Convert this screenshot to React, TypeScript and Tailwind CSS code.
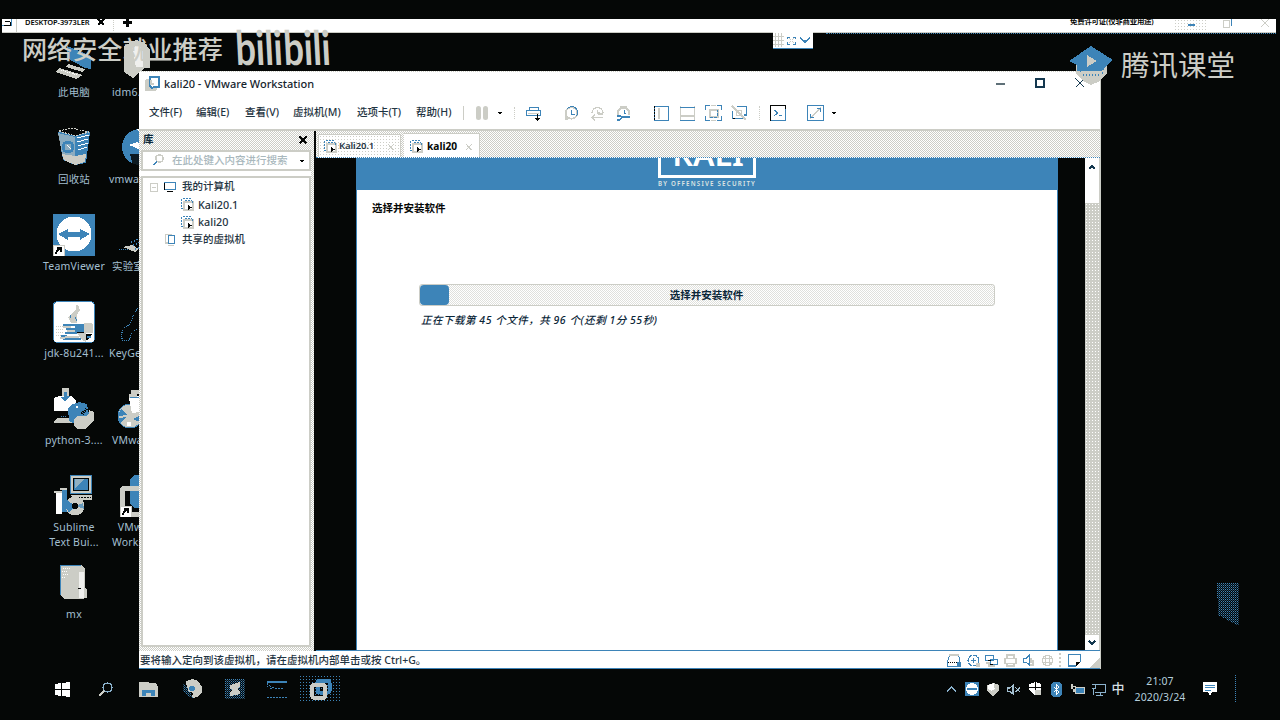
import type { ReactNode } from "react";

const BLUE = "#3d84b8";
const GRAY = "#cccdc6";
const INK = "#050706";

function Svg({ w, h, children, className = "" }: { w: number; h: number; children: ReactNode; className?: string }) {
  return (
    <svg width={w} height={h} viewBox={`0 0 ${w} ${h}`} fill="none" shapeRendering="crispEdges" className={`shrink-0 ${className}`}>
      {children}
    </svg>
  );
}

function PcIcon() {
  return (
    <Svg w={42} h={42}>
      <path d="M14 6 L38 16 V29 L32 28 L14 18 Z" fill={BLUE} />
      <path d="M15 24 L32 29 L30 32 L13 27 Z" fill={GRAY} />
      <path d="M6 28 L30 35 L23 39 L3 32 Z" fill={GRAY} />
      <path d="M8 30 L24 35" stroke="#fff" strokeDasharray="1 1" />
    </Svg>
  );
}

function RecycleIcon() {
  return (
    <Svg w={42} h={42}>
      <path d="M5 5 L18 1 L37 5 L33 36 L22 38 L10 33 Z" fill={BLUE} />
      <path d="M6 4 L18 1 L36 5 L22 9 Z" fill={INK} stroke={GRAY} strokeDasharray="2 1" />
      <path d="M5 6 L22 10 V37 L10 32 Z" fill={GRAY} fillOpacity=".55" />
      <path d="M24 11 L36 8 M24 15 L35 12 M25 19 L35 16 M25 23 L34 20" stroke="#fff" />
      <path d="M9 27 L22 29 L33 27 L32 35 L22 38 L11 33 Z" fill={GRAY} />
      <circle cx="15" cy="20" r="5" stroke={BLUE} strokeWidth="3" />
      <path d="M14 18 L18 22" stroke="#fff" />
    </Svg>
  );
}

function ShortcutBadge({ y = 31 }: { y?: number }) {
  return (
    <g transform={`translate(0 ${y})`}>
      <rect width="11" height="11" fill="#fff" stroke={GRAY} />
      <path d="M3 9 Q3 5 7 4 M4 3 H8 V7" stroke={INK} strokeWidth="1.6" />
    </g>
  );
}

function TeamViewerIcon() {
  return (
    <Svg w={42} h={42}>
      <rect width="42" height="42" fill={BLUE} />
      <circle cx="21" cy="20" r="17.5" fill="#fff" />
      <path d="M5 20 L15 15 V18 H27 V15 L37 20 L27 26 V23 H15 V26 Z" fill={BLUE} />
      <ShortcutBadge />
    </Svg>
  );
}

function JavaIcon() {
  return (
    <Svg w={42} h={42}>
      <rect x=".5" y=".5" width="41" height="41" rx="4" fill="#fff" stroke={BLUE} />
      <path d="M23 4 H25 L27 9 L24 14 V22 H18 L15 16 L21 11 L23 8 Z" fill={GRAY} />
      <path d="M22 16 L24 20 M17 17 L18 14" stroke={BLUE} />
      <path d="M3 25 h8 M3 28 h8 M3 31 h8 M3 34 h6" stroke={GRAY} strokeDasharray="1 1" />
      <path d="M10 24 H22 L24 25 M13 28 H23 M12 32 H25 M8 35 H14 M10 38 H28" stroke={BLUE} strokeWidth="1.500" />
      <path d="M10 26 H18 M14 30 H24 M12 36 H26 M7 37 H12" stroke={GRAY} strokeWidth="2" />
      <rect x="22" y="23" width="9" height="8" fill={BLUE} />
      <path d="M31 22 H38 L40 24 V32 H31 Z M24 32 H33 V41 L28 38 Z" fill={GRAY} />
      <path d="M33 33 H39 L36 38 L33 39 Z" fill={INK} />
      <path d="M34 36 H38" stroke={BLUE} strokeWidth="2" />
      <path d="M24 31 H31" stroke={INK} />
    </Svg>
  );
}

function PythonIcon() {
  return (
    <Svg w={42} h={42}>
      <rect x="9" y="0" width="7" height="12" fill={GRAY} />
      <path d="M1 10 L6 8 H18 L23 12 V23 H1 Z" fill="#fff" />
      <path d="M11 4 H14 V8 H17 L12 14 L7 9 H11 Z" fill={BLUE} />
      <path d="M1 33 L5 30 H22 V35 H1 Z" fill={GRAY} />
      <path d="M8 28 H14" stroke={BLUE} strokeDasharray="1 1" />
      <path d="M15 20 L20 16 L26 14 L34 16 L36 27 L26 31 L22 36 L16 33 Z" fill={BLUE} />
      <path d="M36 22 L41 24 V33 L36 37 L33 41 H24 L21 37 V31 L25 28 H33 L36 26 Z" fill={GRAY} />
      <path d="M29 26 L34 20" stroke={INK} strokeWidth="3" strokeDasharray="1 1" />
      <circle cx="24" cy="19" r="1.2" fill="#fff" />
    </Svg>
  );
}

function InstallerIcon() {
  return (
    <Svg w={42} h={42}>
      <rect x="17" y="0" width="21" height="18" fill={GRAY} stroke={BLUE} />
      <rect x="20" y="3" width="15" height="12" fill={BLUE} stroke={INK} />
      <path d="M22 13 V4 H31 Z" fill={GRAY} fillOpacity=".6" />
      <path d="M18 20 H39 V25 H22 Z" fill={GRAY} />
      <path d="M25 22 H38" stroke={INK} strokeDasharray="2 1" />
      <rect x="3" y="17" width="6" height="22" fill="#fff" />
      <path d="M1 17 H9 M7 14 H14" stroke={GRAY} strokeWidth="2" />
      <rect x="9" y="15" width="5" height="22" fill={BLUE} />
      <circle cx="22" cy="31" r="9.5" fill={GRAY} />
      <path d="M22 31 L14 25 L12 31 L16 38 Z" fill={BLUE} />
      <path d="M22 31 L30 28 L31 34 Z" fill={BLUE} fillOpacity=".7" />
      <circle cx="22" cy="31" r="3" fill={INK} />
    </Svg>
  );
}

function FolderIcon() {
  return (
    <Svg w={42} h={42}>
      <path d="M7 3 H28 L32 7 V25 L34 28 V36 L28 37 H12 L7 33 Z" fill={GRAY} />
      <path d="M7.500 33 V3.500 H28" stroke={BLUE} />
      <path d="M26 10 H31 V36 H26 Z" fill="#fff" fillOpacity=".7" />
      <path d="M10 6 h7 M9 9 h6 M10 12 h5 M9 15 h4" stroke="#fff" strokeDasharray="1 1" />
      <path d="M25 26 H28" stroke={INK} />
    </Svg>
  );
}

function ArchiveIcon() {
  return (
    <Svg w={42} h={42}>
      <path d="M15 6 L27 0 L36 3 L41 10 V28 H36 L24 38 L15 32 Z" fill={GRAY} />
      <path d="M23 8 L30 4 L34 12 V27 H27 Z" fill="#fff" fillOpacity=".7" />
    </Svg>
  );
}

function DiscIcon() {
  return (
    <Svg w={42} h={42}>
      <circle cx="31" cy="20" r="18" fill={BLUE} />
      <path d="M28 2 H42 V14 L35 10 Z M20 18 L28 15 L42 22 V27 L32 23 Z" fill="#fff" />
      <path d="M21 27 H42 V38 H24 Z" fill={INK} fillOpacity=".85" />
    </Svg>
  );
}

function BoatIcon() {
  return (
    <Svg w={42} h={42}>
      <path d="M14 33 L23 31 L30 35 L26 38 Z" fill={GRAY} />
      <path d="M22 28 L34 23 M24 31 L38 26 M26 35 L38 30" stroke={BLUE} strokeDasharray="1 2" strokeWidth="2" />
      <path d="M10 35 H20" stroke={BLUE} strokeDasharray="1 1" />
    </Svg>
  );
}

function KeyIcon() {
  return (
    <Svg w={42} h={42}>
      <path d="M29 7 L25 12 L23 18 L20 24 L14 28 L12 35 L14 40 L20 39 L23 32 L28 28" stroke={BLUE} strokeDasharray="1 1" />
    </Svg>
  );
}

function VmInstallIcon() {
  return (
    <Svg w={42} h={42}>
      <circle cx="21" cy="28" r="12" fill={GRAY} stroke={BLUE} />
      <path d="M18 27 L12 21 L9 28 Z M17 29 L11 36 L10 30 Z M24 31 L31 34 L30 28 Z" fill={BLUE} />
      <path d="M20 10 L30 8 V24 L23 25 Z M18 34 H22 V38 H18 Z" fill="#fff" />
      <path d="M22 4 H32 M20 8 H28" stroke={GRAY} strokeWidth="4" />
      <path d="M21 9.500 H32" stroke={BLUE} />
    </Svg>
  );
}

function VmwareBigIcon() {
  return (
    <Svg w={42} h={42}>
      <rect x="21" y="0" width="20" height="33" rx="7" fill={BLUE} />
      <rect x="13" y="13" width="26" height="26" rx="3" stroke={GRAY} strokeWidth="5" />
      <g transform="translate(11 0)">
        <ShortcutBadge y={31} />
      </g>
    </Svg>
  );
}

function DesktopItem({ icon, lines, side }: { icon: ReactNode; lines: string[]; side?: boolean }) {
  return (
    <div className={side ? "flex h-[87px] w-[75px] flex-col items-start" : "flex h-[87px] w-[76px] flex-col items-center"}>
      {icon}
      <div
        className={
          side
            ? "mt-[3px] whitespace-pre text-left text-[10.5px] leading-[15px] tracking-[0.2px] text-[#a3bfd0]"
            : "mt-[3px] whitespace-pre text-center text-[10.5px] leading-[15px] tracking-[0.2px] text-[#a3bfd0]"
        }
      >
        {lines.map((l) => (
          <div key={l}>{l}</div>
        ))}
      </div>
    </div>
  );
}

function Desktop() {
  return (
    <div className="flex pl-[36px] pt-[40px]">
      <div className="flex flex-col">
        <DesktopItem icon={<PcIcon />} lines={["此电脑"]} />
        <DesktopItem icon={<RecycleIcon />} lines={["回收站"]} />
        <DesktopItem icon={<TeamViewerIcon />} lines={["TeamViewer"]} />
        <DesktopItem icon={<JavaIcon />} lines={["jdk-8u241..."]} />
        <DesktopItem icon={<PythonIcon />} lines={["python-3...."]} />
        <DesktopItem icon={<InstallerIcon />} lines={["Sublime", "Text Bui..."]} />
        <DesktopItem icon={<FolderIcon />} lines={["mx"]} />
      </div>
      <div className="-ml-[3px] flex flex-col">
        <DesktopItem side icon={<ArchiveIcon />} lines={[" idm6.36"]} />
        <DesktopItem side icon={<DiscIcon />} lines={["vmware"]} />
        <DesktopItem side icon={<BoatIcon />} lines={[" 实验室"]} />
        <DesktopItem side icon={<KeyIcon />} lines={["KeyGen"]} />
        <DesktopItem side icon={<VmInstallIcon />} lines={[" VMware"]} />
        <DesktopItem side icon={<VmwareBigIcon />} lines={["   VMware", " Workst"]} />
      </div>
    </div>
  );
}

function RemoteBar() {
  return (
    <div className="absolute left-[2px] top-[19px] h-[15px] w-[1274px]">
      <div className="h-[14px] overflow-hidden border-b border-[#cccdc6] bg-white">
        <div className="flex h-[6px] items-center whitespace-nowrap text-[7.500px] font-semibold text-[#050706]">
          <Svg w={10} h={14} className="mt-[2px]">
            <path d="M0 1.500 H9.500 V9.500 H0" stroke={BLUE} />
            <path d="M3 5 H8 M2 9 H8 V6" stroke={INK} />
          </Svg>
          <div className="ml-[4px] h-[22px] w-px bg-[#cccdc6]" />
          <span className="ml-[8px] mt-[2px] w-[72px] tracking-[-0.1px]">DESKTOP-3973LER</span>
          <Svg w={8} h={8}>
            <path d="M1 1 L7 7 M7 1 L1 7" stroke={INK} strokeWidth="2" />
          </Svg>
          <div className="ml-[8px] h-[26px] border-l border-dotted border-[#cccdc6]" />
          <Svg w={9} h={9} className="ml-[9px]">
            <path d="M0 4.500 H9 M4.500 0 V9" stroke={INK} strokeWidth="2.400" />
          </Svg>
          <span className="ml-[938px] w-[104px] text-[7.400px] tracking-[-0.2px]">免费许可证(仅非商业用途)</span>
          <div className="mt-[10px] flex h-[16px] w-[34px] items-center justify-center bg-[radial-gradient(#cccdc6_0.6px,#fff_0.7px)] bg-[length:3px_3px] pb-[4px]">
            <div className="h-[2px] w-[7px] bg-[#3d84b8]" />
          </div>
          <Svg w={9} h={10} className="ml-[15px] mt-[2px]">
            <rect x=".5" y="2.500" width="6" height="7" stroke={GRAY} />
            <path d="M2 .5 H8.500 V8" stroke={BLUE} />
          </Svg>
          <Svg w={8} h={8} className="ml-[29px] mt-[2px]">
            <path d="M0 0 L8 8 M8 0 L0 8" stroke={GRAY} strokeWidth="1.300" />
          </Svg>
        </div>
      </div>
      <div className="ml-[824px] border-b border-dotted border-[#3d84b8]" />
    </div>
  );
}

function BarHandle() {
  return (
    <div className="absolute left-[773px] top-[32px] flex h-[17px] w-[40px] items-center gap-[3px] border-b border-[#3d84b8] bg-white">
      <Svg w={11} h={16}>
        <path d="M2.500 1 V15 M5.500 1 V15 M8.500 1 V15 M0 4.500 H11 M0 8.500 H11 M0 12.500 H11" stroke={GRAY} />
      </Svg>
      <Svg w={9} h={9}>
        <path d="M.5 2.500 V1 H3 M6 1 H8.500 V3 M.5 6 V8 H3 M6 8 H8.500 V6" stroke={BLUE} />
        <path d="M2 2 L4 4 M7 2 L5 4 M2 7 L4 5 M7 7 L5 5" stroke={GRAY} />
      </Svg>
      <Svg w={12} h={8}>
        <path d="M1 1.500 L6 6 L11 1.500" stroke={BLUE} strokeWidth="1.600" />
      </Svg>
    </div>
  );
}

function VmIcon() {
  return (
    <Svg w={13} h={13}>
      <path d="M2 10 H.5 V.5 H9.500 V2" stroke={BLUE} strokeDasharray="2 1" />
      <rect x="3" y="3.500" width="8.500" height="8.500" fill="#fff" stroke={GRAY} strokeWidth="2" />
      <path d="M11.500 3 V6 M4 2.500 H11" stroke={BLUE} strokeDasharray="2 1" />
      <path d="M7 7 L11 9.500 L7 12 Z" fill={INK} />
    </Svg>
  );
}

function Divider() {
  return <div className="h-[14px] w-px bg-[#cccdc6]" />;
}

function Caret() {
  return (
    <Svg w={6} h={4}>
      <path d="M0 .5 H6 L3 4 Z" fill={INK} />
    </Svg>
  );
}

function Slot({ className, children }: { className: string; children: ReactNode }) {
  return <div className={`flex shrink-0 items-center justify-center ${className}`}>{children}</div>;
}

function MenuBar() {
  return (
    <div className="flex h-[34px] items-center whitespace-nowrap border-b-2 border-[#cccdc6] pl-[10px] text-[10.5px] font-medium text-[#1f3442]">
      <span className="w-[47px]">文件(F)</span>
      <span className="w-[49px]">编辑(E)</span>
      <span className="w-[48px]">查看(V)</span>
      <span className="w-[64px]">虚拟机(M)</span>
      <span className="w-[59px]">选项卡(T)</span>
      <span className="w-[41px]">帮助(H)</span>
      <Slot className="w-[12px]"><Divider /></Slot>
      <Slot className="w-[26px] gap-[2px]">
        <div className="h-[14px] w-[5px] rounded-sm bg-[#cccdc6]" />
        <div className="h-[14px] w-[5px] rounded-sm bg-[#cccdc6]" />
      </Slot>
      <Slot className="w-[10px]"><Caret /></Slot>
      <Slot className="w-[18px]">
        <div className="h-[12px] border-l border-dotted border-[#cccdc6]" />
      </Slot>
      <Slot className="w-[21px]">
        <Svg w={15} h={15}>
          <path d="M3.500 5 V1.500 H12 V5" stroke={BLUE} />
          <rect x=".5" y="4.500" width="14" height="5" stroke={BLUE} />
          <path d="M2 7.500 H13" stroke={GRAY} />
          <path d="M11.500 8 V13 M9.500 12 L11.500 14 L13.500 12" stroke={INK} strokeWidth="1.200" />
        </Svg>
      </Slot>
      <Slot className="ml-[14px] w-[26px]">
        <Svg w={14} h={15}>
          <circle cx="7.500" cy="7" r="5.800" stroke={GRAY} strokeWidth="1.800" />
          <path d="M3 3 A5.800 5.800 0 0 1 12.500 10" stroke={BLUE} />
          <path d="M7.500 4 V8 H10.500" stroke={BLUE} />
          <path d="M1 9 L6 13 L1 14 Z" fill={GRAY} />
        </Svg>
      </Slot>
      <Slot className="w-[26px]">
        <Svg w={15} h={15}>
          <path d="M2 7 A5.500 5.500 0 0 1 13 7 M7.500 4 V7 H10 M2 11.500 H13 M5 9 L2 11.500 L5 14 M8 8 H13" stroke={GRAY} strokeWidth="1.400" />
        </Svg>
      </Slot>
      <Slot className="w-[26px]">
        <Svg w={15} h={15}>
          <path d="M2 9 V5 L5 1.500 H10 L13 5 V9" stroke={GRAY} strokeWidth="2.200" />
          <path d="M8 4 V7 H10" stroke={BLUE} />
          <path d="M1 9.500 H4 L5.500 11 H14 M1 13.500 H4 L5.500 12" stroke={BLUE} strokeWidth="2" />
        </Svg>
      </Slot>
      <Slot className="ml-[12px] w-[26px]">
        <Svg w={15} h={15}>
          <rect x=".7" y=".7" width="13.600" height="13.600" stroke={BLUE} strokeWidth="1.400" />
          <path d="M.5 0 V15" stroke={INK} strokeDasharray="2 1" />
          <path d="M5 2 V13" stroke={GRAY} strokeWidth="2" />
        </Svg>
      </Slot>
      <Slot className="w-[26px]">
        <Svg w={15} h={15}>
          <path d="M.5 0 V15 M14.500 0 V15" stroke={GRAY} />
          <path d="M0 1 H15 M0 14 H15" stroke={BLUE} />
          <path d="M1 10 H14" stroke={GRAY} strokeWidth="2" />
        </Svg>
      </Slot>
      <Slot className="w-[26px]">
        <Svg w={17} h={16}>
          <path d="M.5 5 V.5 H5 M12 .5 H16.500 V5 M.5 11 V15.500 H5 M12 15.500 H16.500 V11" stroke={BLUE} />
          <path d="M6 .5 H11 M6 15.500 H11" stroke={GRAY} />
          <rect x="4.500" y="4.500" width="8" height="7" stroke={GRAY} strokeWidth="2" />
          <path d="M5 12 H12 V5" stroke={BLUE} strokeDasharray="3 1" />
        </Svg>
      </Slot>
      <Slot className="w-[26px]">
        <Svg w={16} h={16}>
          <path d="M6 1.500 H15.500 V10 H13 M1.500 6 V13.500 H12" stroke={BLUE} strokeWidth="1.300" />
          <path d="M1.500 13.500 H5 M10 6 V10" stroke={INK} strokeDasharray="2 1" />
          <path d="M1 1 L15 15" stroke={GRAY} strokeWidth="2.500" />
          <path d="M5 5 H10 V10 H5 Z" stroke={GRAY} />
        </Svg>
      </Slot>
      <Slot className="w-[14px]"><div className="h-[14px] border-l border-dotted border-[#cccdc6]" /></Slot>
      <Slot className="w-[24px]">
        <Svg w={16} h={16}>
          <rect x=".7" y=".7" width="14.600" height="14.600" stroke={INK} strokeWidth="1.400" />
          <path d="M1 15.300 H15.300 V4" stroke={BLUE} strokeWidth="1.400" />
          <path d="M4 5 L8 8 L4 10.500 M9 10.500 H12" stroke={BLUE} />
        </Svg>
      </Slot>
      <Slot className="ml-[14px] w-[23px]">
        <Svg w={17} h={16}>
          <rect x=".5" y=".5" width="16" height="15" stroke={BLUE} />
          <path d="M3 13 L14 3" stroke={GRAY} strokeWidth="1.500" />
          <path d="M10 3.500 H13.500 V7 M3.500 9 V12.500 H7" stroke={BLUE} />
        </Svg>
      </Slot>
      <Slot className="w-[14px]"><Caret /></Slot>
    </div>
  );
}

function TitleBar() {
  return (
    <div className="flex h-[26px] items-center border-t border-dotted border-[#cccdc6] pl-[6px]">
      <Svg w={16} h={16} className="mb-px">
        <rect x="0" y="3" width="12" height="12" rx="2" fill={GRAY} />
        <path d="M4.500 1 H14 V11 H9 L7 12 L4.500 10 Z" fill="#fff" stroke={BLUE} strokeWidth="2" />
        <path d="M6 4 V8 H9" stroke={GRAY} strokeWidth="2" />
      </Svg>
      <span className="mb-px ml-[3px] w-[832px] whitespace-nowrap text-[11px] font-medium text-[#16242d]">kali20 - VMware Workstation</span>
      <div className="mb-[2px] h-[2px] w-[9px] bg-[#5f7078]" />
      <div className="mb-[3px] ml-[30px] h-[10px] w-[10px] border-2 border-[#14384f]" />
      <Svg w={10} h={10} className="mb-[3px] ml-[30px]">
        <path d="M.5 .5 L9.500 9.500 M9.500 .5 L.5 9.500" stroke="#14384f" strokeWidth="1.400" />
      </Svg>
    </div>
  );
}

function TreeRow({ className, icon, label }: { className: string; icon: ReactNode; label: string }) {
  return (
    <div className={`flex h-[17.5px] items-center whitespace-nowrap ${className}`}>
      {icon}
      <span>{label}</span>
    </div>
  );
}

function Library() {
  return (
    <div className="flex w-[175px] shrink-0 flex-col bg-[repeating-conic-gradient(#cccdc6_0_25%,#fff_0_50%)] bg-[length:2px_2px] pr-[3px]">
      <div className="flex h-[19px] items-center justify-between pb-[2px] pl-[4px] pr-[4px] text-[10.5px] font-bold text-[#0d2a3c]">
        <span>库</span>
        <Svg w={8} h={8}>
          <path d="M.5 .5 L7.500 7.500 M7.500 .5 L.5 7.500" stroke={INK} strokeWidth="1.800" />
        </Svg>
      </div>
      <div className="ml-[2px] flex h-[21px] items-center border-2 border-[#cccdc6] bg-white pl-[9px] pr-[2px]">
        <Svg w={12} h={12} className="mb-[2px]">
          <circle cx="7.500" cy="4.500" r="3.700" stroke={GRAY} strokeWidth="1.600" />
          <path d="M5 7.500 L1 11" stroke={BLUE} strokeWidth="1.300" />
        </Svg>
        <span className="ml-[8px] w-[127px] shrink-0 whitespace-nowrap pt-px text-[10.500px] font-medium text-[#a9b8bd]">在此处键入内容进行搜索</span>
        <Caret />
      </div>
      <div className="h-[5px] bg-white" />
      <div className="ml-[2px] flex-1 border-2 border-[#cccdc6] bg-white pt-[0.600px] text-[10.5px] font-medium text-[#1f3442]">
        <TreeRow
          className="gap-[6px] pl-[7px]"
          icon={
            <>
              <Svg w={8} h={9}>
                <rect x=".5" y=".5" width="7" height="8" stroke={GRAY} />
                <path d="M2 4.500 H6" stroke={GRAY} />
              </Svg>
              <Svg w={12} h={10}>
                <rect x=".5" y=".5" width="11" height="7" stroke={BLUE} />
                <path d="M0 1 V8 M3 9.500 H9" stroke={INK} />
              </Svg>
            </>
          }
          label="我的计算机"
        />
        <TreeRow className="gap-[4px] pl-[38px] text-[10.8px]" icon={<VmIcon />} label="Kali20.1" />
        <TreeRow className="gap-[4px] pl-[38px] text-[10.8px]" icon={<VmIcon />} label="kali20" />
        <TreeRow
          className="gap-[6px] pl-[22px]"
          icon={
            <Svg w={11} h={12}>
              <path d="M3 9 H.5 V.5 H7" stroke={GRAY} strokeWidth="1.500" />
              <rect x="3" y="1.500" width="6.500" height="8" stroke={BLUE} />
              <path d="M3 11.500 H9" stroke={GRAY} strokeWidth="2" />
            </Svg>
          }
          label="共享的虚拟机"
        />
      </div>
      <div className="h-[4px]" />
    </div>
  );
}

function CloseTab() {
  return (
    <Svg w={6} h={6}>
      <path d="M0 0 L6 6 M6 0 L0 6" stroke={GRAY} strokeWidth="1.400" />
    </Svg>
  );
}

function Tabs() {
  return (
    <div className="flex h-[27px] items-end border-b border-dotted border-[#3d84b8] bg-[repeating-conic-gradient(#cccdc6_0_25%,#fff_0_50%)] bg-[length:2px_2px] pl-[2px]">
      <div className="flex h-[23px] w-[83px] items-center border border-b-0 border-[#cccdc6] bg-[radial-gradient(#cccdc6_0.6px,#fff_0.7px)] bg-[length:3px_3px] pl-[5px] pt-px text-[9.500px] font-semibold text-[#1f3442]">
        <VmIcon />
        <span className="ml-[2px] w-[49px] tracking-[-0.1px]">Kali20.1</span>
        <CloseTab />
      </div>
      <div className="ml-[3px] flex h-[24px] w-[76px] items-center border-r border-t border-[#cccdc6] bg-white pl-[6px] pt-[2px] text-[10.200px] font-bold text-[#050706]">
        <VmIcon />
        <span className="ml-[4px] w-[39px]">kali20</span>
        <CloseTab />
      </div>
    </div>
  );
}

function KaliLogo() {
  return (
    <div className="flex flex-col items-center">
      <div className="flex h-[20px] w-[98px] items-start justify-center border-x-[3px] border-b-[3px] border-white">
        <div className="flex h-[8px] items-end justify-center overflow-hidden pl-[2px] text-[32px] font-semibold leading-[24px] text-white">KALI</div>
      </div>
      <div className="mt-[2px] h-[8px] whitespace-nowrap text-[6.200px] font-semibold leading-[8px] tracking-[1.200px] text-[#dfe4e3]">BY OFFENSIVE SECURITY</div>
    </div>
  );
}

function Installer() {
  return (
    <div className="flex flex-1 flex-col border-x border-[#3d84b8] bg-white">
      <div className="flex h-[32px] justify-center overflow-hidden bg-[#3d84b8]">
        <KaliLogo />
      </div>
      <div className="ml-[15px] mt-[10px] h-[16px] text-[10.500px] font-bold leading-[16px] text-[#050706]">选择并安装软件</div>
      <div className="ml-[62px] mt-[68px] flex h-[22px] w-[576px] rounded-[3px] border border-[#cccdc6] bg-[repeating-conic-gradient(#dfe0dc_0_25%,#fff_0_50%)] bg-[length:2px_2px]">
        <div className="w-[29px] rounded-sm bg-[#3d84b8]" />
        <div className="flex flex-1 items-center justify-center pr-[30px] pt-px text-[10.500px] font-bold text-[#0b2638]">
          <span>选择并安装软件</span>
        </div>
      </div>
      <div className="ml-[64px] mt-[6px] whitespace-nowrap text-[10.500px] font-medium italic leading-[16px] tracking-[0.520px] text-[#0b2638]">
        正在下载第 45 个文件，共 96 个(还剩 1分 55秒)
      </div>
    </div>
  );
}

function Scrollbar() {
  return (
    <div className="flex w-[15px] flex-col border-r border-[#cccdc6] bg-white">
      <div className="flex h-[45px] justify-center pt-[6px]">
        <Svg w={8} h={6}>
          <path d="M1 5 L4 2 L7 5" stroke="#14384f" strokeWidth="2" />
        </Svg>
      </div>
      <div className="flex-1 bg-[radial-gradient(#fff_0.6px,#cccdc6_0.7px)] bg-[length:3px_3px]" />
      <div className="flex h-[15px] items-center justify-center">
        <Svg w={8} h={6}>
          <path d="M1 1 L4 4 L7 1" stroke="#14384f" strokeWidth="2" />
        </Svg>
      </div>
    </div>
  );
}

function StatusBar() {
  return (
    <div className="flex h-[18px] items-center border-b border-[#3d84b8] bg-white pt-px">
      <span className="w-[808px] shrink-0 whitespace-nowrap pl-[1px] pt-[2px] text-[10.500px] font-medium text-[#1f3442]">要将输入定向到该虚拟机，请在虚拟机内部单击或按 Ctrl+G。</span>
      <div className="flex items-center gap-[5.500px]">
        <Svg w={14} h={13}>
          <path d="M.5 8 L2.500 1 H11.500 L13 8 V12 H.5 Z" stroke={BLUE} />
          <path d="M2 1 H12" stroke={GRAY} strokeWidth="2" />
          <path d="M1 8.500 H11" stroke={INK} strokeDasharray="1 1" />
          <rect x="10" y="8" width="3" height="4" fill={BLUE} />
        </Svg>
        <Svg w={13} h={13}>
          <circle cx="6.500" cy="6.500" r="5.500" stroke={BLUE} strokeDasharray="4 1" />
          <path d="M4 6.500 H9 M6.500 4 V9" stroke={BLUE} />
          <path d="M9 9 H13 V13 H9 Z" fill={GRAY} />
        </Svg>
        <Svg w={13} h={13}>
          <path d="M.5 1 H8.500 V6 H.5 Z M5 5 H12.500 V10 H5 Z" fill="#fff" stroke={BLUE} />
          <path d="M3 6.500 H6 M5 10.500 H8" stroke={INK} />
          <path d="M1 9 H4 V12 H10" stroke={GRAY} strokeWidth="2" />
        </Svg>
        <Svg w={13} h={13}>
          <path d="M3 4 V1 H10 V4 M1 4.500 H12 V9.500 H1 Z M3 9 V12 H10 V9" stroke={GRAY} strokeWidth="1.500" />
        </Svg>
        <Svg w={13} h={13}>
          <path d="M1 4.500 H4 L7 1.500 V10.500 L4 8 H1 Z" stroke={BLUE} />
          <path d="M9 4 V9 M11 6 V12 M8 11 H12" stroke={GRAY} strokeWidth="2" />
        </Svg>
        <Svg w={13} h={13}>
          <circle cx="6.500" cy="6.500" r="5" stroke={GRAY} strokeWidth="1.500" />
          <path d="M2 4.500 H11 M2 8.500 H11 M4.500 2 V11 M8.500 2 V11" stroke={GRAY} />
        </Svg>
      </div>
      <div className="ml-[5px] h-[14px] border-l-2 border-dotted border-[#cccdc6]" />
      <Svg w={13} h={13} className="ml-[7px]">
        <path d="M8 12 H.5 V.5 H12.500 V8" stroke={BLUE} strokeWidth="1.300" />
        <path d="M8 8 H12 L8 12 Z" fill={INK} />
      </Svg>
      <Svg w={12} h={16} className="ml-[8px]">
        <path d="M12 5 V16 H0 Z" fill={GRAY} />
      </Svg>
    </div>
  );
}

function VmWindow() {
  return (
    <div className="absolute left-[139px] top-[71px] flex h-[598px] w-[962px] flex-col overflow-hidden border-r border-[#cccdc6] bg-white">
      <TitleBar />
      <MenuBar />
      <div className="flex min-h-0 flex-1">
        <Library />
        <div className="flex flex-1 flex-col border-l-2 border-[#050706]">
          <Tabs />
          <div className="flex flex-1 border-b border-[#3d84b8] bg-[#050706] pl-[40px]">
            <Installer />
            <div className="w-[27px]" />
            <Scrollbar />
          </div>
        </div>
      </div>
      <StatusBar />
    </div>
  );
}

function LogoWord() {
  return (
    <span className="block w-[47px] origin-top-left skew-x-4 scale-y-[1.32] font-[Lato,sans-serif] text-[36px] font-bold leading-[36px] tracking-[-0.2px]">
      bili
    </span>
  );
}

function Watermarks() {
  return (
    <>
      <div className="absolute left-[22px] top-[31px] whitespace-nowrap text-[25.100px] font-medium leading-[36px] text-[#cccdc6]">网络安全就业推荐</div>
      <div className="absolute left-[234px] top-[23px] flex gap-[1px] text-[#cccdc6]">
        <LogoWord />
        <LogoWord />
      </div>
      <div className="absolute left-[1069px] top-[45px] flex items-start">
        <Svg w={44} h={40}>
          <path d="M7 20 H38 V28 L31 36 L22 40 L14 36 L7 29 Z" fill={GRAY} />
          <path d="M8 22 L14 24 L10 27 M34 24 H37 M33 28 H36 M14 30 H30" stroke={BLUE} strokeDasharray="1 2" strokeWidth="2" />
          <path d="M22 1 L44 15 L32 26 H8 V20 L0 16 Z" fill={BLUE} />
          <path d="M18 10 L28 16 L18 22 Z" fill={GRAY} />
        </Svg>
        <span className="ml-[8px] whitespace-nowrap text-[28.500px] font-normal leading-[40px] text-[#cccdc6]">腾讯课堂</span>
      </div>
      <div className="absolute left-[1217px] top-[583px]">
        <Svg w={22} h={43}>
          <defs>
            <pattern id="mesh" width="2" height="2" patternUnits="userSpaceOnUse">
              <rect width="1" height="1" fill={BLUE} />
              <rect x="1" y="1" width="1" height="1" fill={BLUE} fillOpacity=".5" />
            </pattern>
          </defs>
          <path d="M0 0 H22 V43 L1 32 Z" fill="url(#mesh)" />
        </Svg>
      </div>
    </>
  );
}

function Taskbar() {
  return (
    <div className="absolute bottom-0 left-0 flex h-[51px] w-full items-start pt-[4px]">
      <div className="ml-[41px] flex h-[32px] items-center">
        <Slot className="w-[43px]">
          <Svg w={15} h={15}>
            <path d="M0 2 L6 1 V7 H0 Z M7 1 L15 0 V7 H7 Z M0 8 H6 V14 L0 13 Z M7 8 H15 V15 L7 14 Z" fill="#fff" />
          </Svg>
        </Slot>
        <Slot className="w-[42px]">
          <Svg w={15} h={15}>
            <circle cx="9.500" cy="5.500" r="4.500" stroke="#8bb2cd" strokeWidth="1.300" />
            <path d="M6 9 L1 14" stroke={GRAY} strokeWidth="1.500" />
          </Svg>
        </Slot>
        <Slot className="w-[45px]">
          <Svg w={19} h={16}>
            <path d="M0 1 H9 L10 2 H17 L19 6 V16 H0 Z" fill={GRAY} />
            <path d="M3 15 V9 H16 V15 H12 V12 H7 V15 Z" fill={BLUE} />
          </Svg>
        </Slot>
        <Slot className="w-[42px]">
          <Svg w={20} h={20}>
            <path d="M4 2 L10 0 L16 2 L20 8 V13 L16 18 L10 19 L11 14 L5 9 Z" fill={GRAY} />
            <path d="M1 4 L7 10 L11 19 L4 16 L1 11 Z" fill="url(#mesh)" />
            <circle cx="10" cy="9.500" r="3.500" fill={BLUE} stroke={GRAY} />
          </Svg>
        </Slot>
        <Slot className="w-[43px]">
          <Svg w={20} h={20}>
            <rect width="20" height="20" fill="url(#mesh)" />
            <path d="M5 6 L15 3 V8 L12 10 L15 12 V15 L5 17 V13 L8 11 L5 10 Z" fill={GRAY} />
          </Svg>
        </Slot>
        <Slot className="w-[42px]">
          <Svg w={20} h={17}>
            <path d="M0 1 H20" stroke={BLUE} strokeWidth="2" />
            <path d="M.5 2 V6 M2 4.500 L6 6.500 L3 8 M8 7.500 H16 M0 16.500 H20" stroke={BLUE} strokeDasharray="2 1" />
          </Svg>
        </Slot>
        <div className="ml-[1px] flex h-[28px] w-[42px] items-center justify-center bg-[radial-gradient(#3d84b8_0.5px,#050706_0.7px)] bg-[length:3px_3px]">
          <Svg w={22} h={22} className="ml-[2px]">
            <rect x="7.500" y="2.500" width="12" height="12" rx="2" stroke={BLUE} strokeWidth="4" />
            <rect x="2" y="7" width="13" height="13" rx="2" stroke={GRAY} strokeWidth="3.500" />
          </Svg>
        </div>
      </div>
      <div className="ml-[600px] flex h-[32px] items-center">
        <Slot className="w-[20px]">
          <Svg w={11} h={7}><path d="M1 6 L5.500 1 L10 6" stroke="#8bb2cd" strokeWidth="1.300" /></Svg>
        </Slot>
        <Slot className="w-[21px]">
          <Svg w={14} h={14}>
            <rect width="14" height="14" fill={BLUE} />
            <circle cx="7" cy="7" r="6" fill="#fff" />
            <path d="M2 7 H12" stroke={BLUE} strokeWidth="2" />
          </Svg>
        </Slot>
        <Slot className="w-[21px]">
          <Svg w={12} h={13}>
            <path d="M0 2 L6 0 L12 2 V8 L6 13 L0 8 Z" fill={GRAY} />
            <path d="M1 3 L6 1 V6 H2 Z M4 8 L8 5" fill="#fff" stroke="#fff" />
          </Svg>
        </Slot>
        <Slot className="w-[21px]">
          <Svg w={14} h={11}>
            <path d="M.5 4 H3 L6 1 V10 L3 7.500 H.5 Z M8.500 3.500 L13 8 M13 3.500 L8.500 8" stroke="#a3bfd0" strokeWidth="1.200" />
          </Svg>
        </Slot>
        <Slot className="w-[22px]">
          <Svg w={12} h={14}>
            <path d="M0 2 L6 0 L12 2 V8 L6 13 L0 8 Z" fill="#fff" />
            <path d="M6 0 V13 M0 5.500 H12" stroke={INK} />
            <path d="M6 8 H12 V13 H6 Z" fill={GRAY} />
          </Svg>
        </Slot>
        <Slot className="w-[21px]">
          <Svg w={11} h={15}>
            <rect width="11" height="15" rx="4" fill={BLUE} />
            <path d="M3 5 L8 10 L5.500 12 V3 L8 5 L3 10" stroke="#fff" />
          </Svg>
        </Slot>
        <Slot className="w-[21px]">
          <Svg w={14} h={11}>
            <rect x="4" y="3.500" width="9" height="6" fill={BLUE} stroke={GRAY} />
            <path d="M0 2.500 H5 M1 0 V5 M3 5 V8" stroke={GRAY} strokeWidth="1.500" />
          </Svg>
        </Slot>
        <Slot className="w-[20px]">
          <Svg w={15} h={13}>
            <path d="M3 1.500 H14.500 V9.500 H4 M9 9 V12 M5 12.500 H12 M.5 1 H4 V5 H1 M2.500 5 V12" stroke="#8bb2cd" />
          </Svg>
        </Slot>
        <span className="w-[20px] text-center text-[13px] font-medium text-[#d4dfe2]">中</span>
        <div className="w-[64px] whitespace-nowrap text-center text-[10.500px] leading-[16px] tracking-[0.1px] text-[#b5cedc]">
          <div>21:07</div>
          <div>2020/3/24</div>
        </div>
        <Svg w={14} h={14} className="ml-[11px]">
          <path d="M0 0 H14 V10 H9 L7 14 L5 10 H0 Z" fill="#fff" />
          <path d="M2 3 H12 M2 5.500 H12 M2 8 H8" stroke={BLUE} />
        </Svg>
      </div>
      <div className="ml-[18px] mt-[2px] h-[27px] border-l border-dotted border-[#3d84b8]" />
    </div>
  );
}

export default function App() {
  return (
    <div className="relative h-[720px] w-[1280px] overflow-hidden bg-[#050706] font-['Noto_Sans','Noto_Sans_CJK_SC',sans-serif]">
      <Desktop />
      <RemoteBar />
      <BarHandle />
      <VmWindow />
      <Watermarks />
      <Taskbar />
    </div>
  );
}
